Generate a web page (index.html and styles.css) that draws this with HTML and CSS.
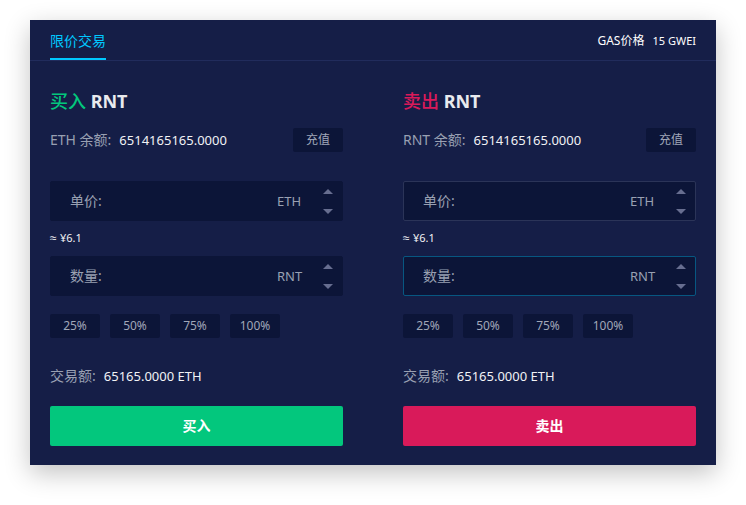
FILE: index.html
```html
<!DOCTYPE html>
<html lang="zh-CN">
<head>
<meta charset="utf-8">
<meta name="viewport" content="width=device-width, initial-scale=1">
<title>限价交易</title>
<link rel="stylesheet" href="styles.css">
</head>
<body>
<main class="panel">
  <header class="panel-header">
    <a class="tab" href="#limit">限价交易</a>
    <p class="gas"><span>GAS价格</span><span class="gas-value">15 GWEI</span></p>
  </header>
  <div class="columns" id="limit">
    <form class="order buy">
      <h2 class="title"><span class="side">买入</span> RNT</h2>
      <div class="balance">
        <span class="caption">ETH 余额:</span><span class="value">6514165165.0000</span>
        <button class="chip deposit" type="button">充值</button>
      </div>
      <div class="field">
        <label for="buy-price">单价:</label>
        <input id="buy-price" type="text" inputmode="decimal">
        <span class="unit">ETH</span>
        <span class="stepper">
          <button type="button" aria-label="+"><svg viewBox="0 0 10 5"><path d="M0 5 5 0l5 5z"/></svg></button>
          <button type="button" aria-label="-"><svg viewBox="0 0 10 5"><path d="M0 0h10L5 5z"/></svg></button>
        </span>
      </div>
      <p class="approx">≈ <span>¥6.1</span></p>
      <div class="field">
        <label for="buy-amount">数量:</label>
        <input id="buy-amount" type="text" inputmode="decimal">
        <span class="unit">RNT</span>
        <span class="stepper">
          <button type="button" aria-label="+"><svg viewBox="0 0 10 5"><path d="M0 5 5 0l5 5z"/></svg></button>
          <button type="button" aria-label="-"><svg viewBox="0 0 10 5"><path d="M0 0h10L5 5z"/></svg></button>
        </span>
      </div>
      <div class="percents">
        <button class="chip" type="button">25%</button>
        <button class="chip" type="button">50%</button>
        <button class="chip" type="button">75%</button>
        <button class="chip" type="button">100%</button>
      </div>
      <p class="total"><span class="caption">交易额:</span><span class="value">65165.0000 ETH</span></p>
      <button class="submit" type="button">买入</button>
    </form>
    <form class="order sell">
      <h2 class="title"><span class="side">卖出</span> RNT</h2>
      <div class="balance">
        <span class="caption">RNT 余额:</span><span class="value">6514165165.0000</span>
        <button class="chip deposit" type="button">充值</button>
      </div>
      <div class="field field-hover">
        <label for="sell-price">单价:</label>
        <input id="sell-price" type="text" inputmode="decimal">
        <span class="unit">ETH</span>
        <span class="stepper">
          <button type="button" aria-label="+"><svg viewBox="0 0 10 5"><path d="M0 5 5 0l5 5z"/></svg></button>
          <button type="button" aria-label="-"><svg viewBox="0 0 10 5"><path d="M0 0h10L5 5z"/></svg></button>
        </span>
      </div>
      <p class="approx">≈ <span>¥6.1</span></p>
      <div class="field field-active">
        <label for="sell-amount">数量:</label>
        <input id="sell-amount" type="text" inputmode="decimal">
        <span class="unit">RNT</span>
        <span class="stepper">
          <button type="button" aria-label="+"><svg viewBox="0 0 10 5"><path d="M0 5 5 0l5 5z"/></svg></button>
          <button type="button" aria-label="-"><svg viewBox="0 0 10 5"><path d="M0 0h10L5 5z"/></svg></button>
        </span>
      </div>
      <div class="percents">
        <button class="chip" type="button">25%</button>
        <button class="chip" type="button">50%</button>
        <button class="chip" type="button">75%</button>
        <button class="chip" type="button">100%</button>
      </div>
      <p class="total"><span class="caption">交易额:</span><span class="value">65165.0000 ETH</span></p>
      <button class="submit" type="button">卖出</button>
    </form>
  </div>
</main>
</body>
</html>
```
FILE: styles.css
```css
* {
  box-sizing: border-box;
}

body {
  margin: 0;
  padding: 20px 30px 40px;
  background: #fff;
  font-family: "Noto Sans", "Noto Sans CJK SC", sans-serif;
  font-size: 14px;
  line-height: 20px;
  color: #f1f2f5;
}

p,
h2 {
  margin: 0;
}

button,
input {
  font: inherit;
  color: inherit;
  border: 0;
  padding: 0;
  margin: 0;
  background: none;
}

button {
  cursor: pointer;
}

.panel {
  background: #151e47;
  box-shadow: 0 8px 24px rgba(0, 0, 0, 0.24);
}

.panel-header {
  display: flex;
  justify-content: space-between;
  padding: 0 20px;
  border-bottom: 1px solid #212c5c;
}

.tab {
  padding: 11px 0 7px;
  border-bottom: 2px solid #00c8ff;
  color: #00c8ff;
  text-decoration: none;
}

.gas {
  display: flex;
  align-items: center;
  gap: 8px;
  padding-top: 2px;
  font-size: 12px;
  color: #fff;
}

.gas-value {
  font-size: 11px;
}

.columns {
  display: grid;
  grid-template-columns: repeat(2, minmax(0, 1fr));
  gap: 60px;
  padding: 28px 20px 19px;
}

.order {
  display: flex;
  flex-direction: column;
}

.title {
  font-size: 18px;
  line-height: 24px;
  font-weight: 700;
  color: #e9eaee;
}

.side {
  font-weight: 500;
}

.buy .side {
  color: #03c77d;
}

.sell .side {
  color: #d91a5a;
}

.balance {
  display: flex;
  align-items: center;
  margin-top: 15px;
}

.caption {
  margin-right: 8px;
  color: #99a0b2;
}

.value {
  font-size: 13px;
}

.chip {
  width: 50px;
  height: 24px;
  border-radius: 2px;
  background: #0c1538;
  color: #a0a7b8;
  font-size: 12px;
}

.deposit {
  margin-left: auto;
}

.field {
  display: flex;
  align-items: center;
  height: 40px;
  padding: 0 9px 0 19px;
  border: 1px solid #0c1538;
  border-radius: 2px;
  background: #0c1538;
  color: #99a0b2;
}

.balance + .field {
  margin-top: 29px;
}

.field-hover {
  border-color: #2b3458;
}

.field-active {
  border-color: #075781;
}

.field input {
  flex: 1;
  min-width: 0;
  height: 20px;
  margin: 0 8px;
  outline: 0;
}

.unit {
  width: 46px;
  font-size: 13px;
}

.stepper {
  display: flex;
  flex-direction: column;
  justify-content: space-between;
  height: 26px;
}

.stepper button {
  display: flex;
  align-items: center;
  height: 6px;
}

.stepper svg {
  width: 10px;
  height: 5px;
  fill: #676e90;
}

.approx {
  margin: 7px 0 8px;
  font-family: "Liberation Sans", sans-serif;
  font-size: 12px;
}

.approx span {
  font-family: "Noto Sans", sans-serif;
  font-size: 11px;
}

.percents {
  display: flex;
  gap: 10px;
  margin-top: 18px;
}

.total {
  display: flex;
  align-items: center;
  margin: 28px 0 20px;
}

.submit {
  height: 40px;
  border-radius: 2px;
  color: #fff;
  font-weight: 700;
}

.buy .submit {
  background: #03c77d;
}

.sell .submit {
  background: #d91a5a;
}
```
